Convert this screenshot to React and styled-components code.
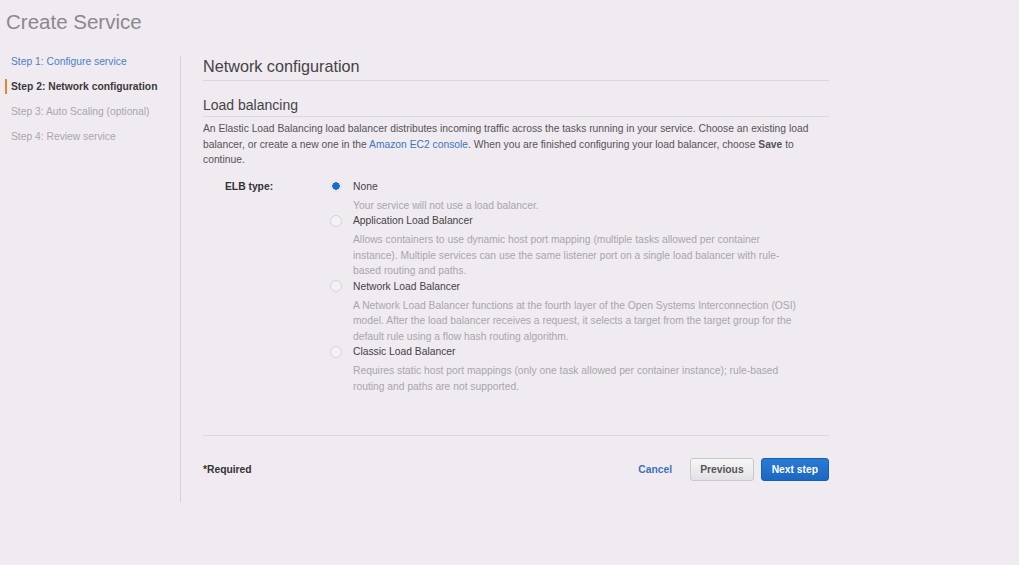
import React, { useState } from "react";
import styled, { createGlobalStyle } from "styled-components";

const GlobalStyle = createGlobalStyle`
  html, body {
    margin: 0;
    padding: 0;
    background: #efebf0;
    font-family: "Liberation Sans", Arial, sans-serif;
    color: #444;
  }
`;

const Page = styled.div`
  width: 1019px;
  height: 565px;
  overflow: hidden;
`;

const Title = styled.h1`
  margin: 0;
  padding: 10px 0 0 6px;
  font-size: 20.5px;
  line-height: 24px;
  font-weight: 400;
  color: #8b888d;
`;

const Body = styled.div`
  display: flex;
  margin-top: 15px;
`;

const Sidebar = styled.ul`
  list-style: none;
  margin: 0;
  padding: 0;
  width: 180px;
`;

const Step = styled.li`
  position: relative;
  height: 25px;
  line-height: 25px;
  padding-left: 11px;
  font-size: 10.3px;
  font-weight: ${({ $state }) => ($state === "active" ? 700 : 400)};
  color: ${({ $state }) =>
    $state === "done" ? "#4d7fc2" : $state === "active" ? "#3a3a3a" : "#aaa7ac"};

  &::before {
    content: "";
    display: ${({ $state }) => ($state === "active" ? "block" : "none")};
    position: absolute;
    left: 5px;
    top: 5px;
    width: 2px;
    height: 15px;
    background: #e8862e;
  }
`;

const Divider = styled.div`
  width: 1px;
  margin-top: 7px;
  height: 446px;
  background: #d5d1d7;
`;

const Main = styled.main`
  margin-left: 22px;
  width: 626px;
`;

const Heading = styled.h2`
  margin: 7px 0 0;
  padding-bottom: 4px;
  font-size: 16.2px;
  line-height: 20px;
  font-weight: 400;
  color: #444;
  border-bottom: 1px solid #d9d5da;
`;

const SubHeading = styled.h3`
  margin: 15px 0 0;
  padding-bottom: 2px;
  font-size: 14px;
  line-height: 18px;
  font-weight: 400;
  color: #444;
  border-bottom: 1px solid #dcd8dd;
`;

const Intro = styled.p`
  margin: 4px 0 0;
  font-size: 10.3px;
  line-height: 15.5px;
  color: #555;
  width: 620px;

  a {
    color: #3e76bd;
    text-decoration: none;
  }
`;

const FieldRow = styled.div`
  display: grid;
  grid-template-columns: 127px 1fr;
  margin-top: 11px;
`;

const FieldLabel = styled.div`
  padding-left: 22px;
  font-size: 10.3px;
  font-weight: 700;
  line-height: 15px;
  color: #333;
`;

const Options = styled.div`
  display: flex;
  flex-direction: column;
`;

const Option = styled.label`
  display: grid;
  grid-template-columns: 23px 1fr;
  cursor: pointer;
`;

const Radio = styled.span`
  box-sizing: border-box;
  width: 12px;
  height: 12px;
  margin-top: 1.5px;
  border-radius: 50%;
  border: 1px solid ${({ $checked }) => ($checked ? "#e2dfe4" : "#d6d3d8")};
  background: ${({ $checked }) =>
    $checked ? "radial-gradient(circle, #1c6bc6 0 3.5px, #f3f1f4 4px)" : "#f4f2f5"};
`;

const OptionText = styled.div`
  font-size: 10.3px;
`;

const OptionTitle = styled.div`
  line-height: 15px;
  color: #444;
`;

const OptionDesc = styled.div`
  margin-top: 4px;
  width: 450px;
  line-height: 15.5px;
  color: #a9a6ab;
`;

const Rule = styled.hr`
  margin: 41px 0 0;
  border: 0;
  border-top: 1px solid #dcd8dd;
`;

const Footer = styled.div`
  display: flex;
  align-items: center;
  padding-top: 22px;
`;

const Required = styled.div`
  flex: 1;
  font-size: 10.3px;
  font-weight: 700;
  color: #333;
`;

const LinkButton = styled.button`
  border: 0;
  background: none;
  padding: 0;
  margin-right: 18px;
  font-family: inherit;
  font-size: 10.3px;
  font-weight: 700;
  color: #3e72b6;
  cursor: pointer;
`;

const Button = styled.button`
  box-sizing: border-box;
  height: 23px;
  padding: 0 ${({ $primary }) => ($primary ? "10px" : "9px")};
  margin-left: ${({ $primary }) => ($primary ? "7px" : "0")};
  border-radius: 3px;
  font-family: inherit;
  font-size: 10.3px;
  font-weight: 700;
  cursor: pointer;
  color: ${({ $primary }) => ($primary ? "#fff" : "#555")};
  border: 1px solid ${({ $primary }) => ($primary ? "#1a5eaf" : "#cbc8cc")};
  background: ${({ $primary }) =>
    $primary
      ? "linear-gradient(#2a7bd6, #1b68c2)"
      : "linear-gradient(#f7f6f7, #e3e1e4)"};
`;

const steps = [
  { label: "Step 1: Configure service", state: "done" },
  { label: "Step 2: Network configuration", state: "active" },
  { label: "Step 3: Auto Scaling (optional)", state: "todo" },
  { label: "Step 4: Review service", state: "todo" },
];

const elbTypes = [
  {
    id: "none",
    title: "None",
    desc: "Your service will not use a load balancer.",
  },
  {
    id: "alb",
    title: "Application Load Balancer",
    desc: "Allows containers to use dynamic host port mapping (multiple tasks allowed per container instance). Multiple services can use the same listener port on a single load balancer with rule-based routing and paths.",
  },
  {
    id: "nlb",
    title: "Network Load Balancer",
    desc: "A Network Load Balancer functions at the fourth layer of the Open Systems Interconnection (OSI) model. After the load balancer receives a request, it selects a target from the target group for the default rule using a flow hash routing algorithm.",
  },
  {
    id: "clb",
    title: "Classic Load Balancer",
    desc: "Requires static host port mappings (only one task allowed per container instance); rule-based routing and paths are not supported.",
  },
];

export default function App() {
  const [elb, setElb] = useState("none");

  return (
    <Page>
      <GlobalStyle />
      <Title>Create Service</Title>
      <Body>
        <Sidebar>
          {steps.map((s) => (
            <Step key={s.label} $state={s.state}>
              {s.label}
            </Step>
          ))}
        </Sidebar>
        <Divider />
        <Main>
          <Heading>Network configuration</Heading>
          <SubHeading>Load balancing</SubHeading>
          <Intro>
            An Elastic Load Balancing load balancer distributes incoming traffic across the tasks
            running in your service. Choose an existing load balancer, or create a new one in the{" "}
            <a href="#ec2">Amazon EC2 console</a>. When you are finished configuring your load
            balancer, choose <b>Save</b> to continue.
          </Intro>
          <FieldRow>
            <FieldLabel>ELB type:</FieldLabel>
            <Options>
              {elbTypes.map((t) => (
                <Option key={t.id} onClick={() => setElb(t.id)}>
                  <Radio $checked={elb === t.id} />
                  <OptionText>
                    <OptionTitle>{t.title}</OptionTitle>
                    <OptionDesc>{t.desc}</OptionDesc>
                  </OptionText>
                </Option>
              ))}
            </Options>
          </FieldRow>
          <Rule />
          <Footer>
            <Required>*Required</Required>
            <LinkButton>Cancel</LinkButton>
            <Button>Previous</Button>
            <Button $primary>Next step</Button>
          </Footer>
        </Main>
      </Body>
    </Page>
  );
}
